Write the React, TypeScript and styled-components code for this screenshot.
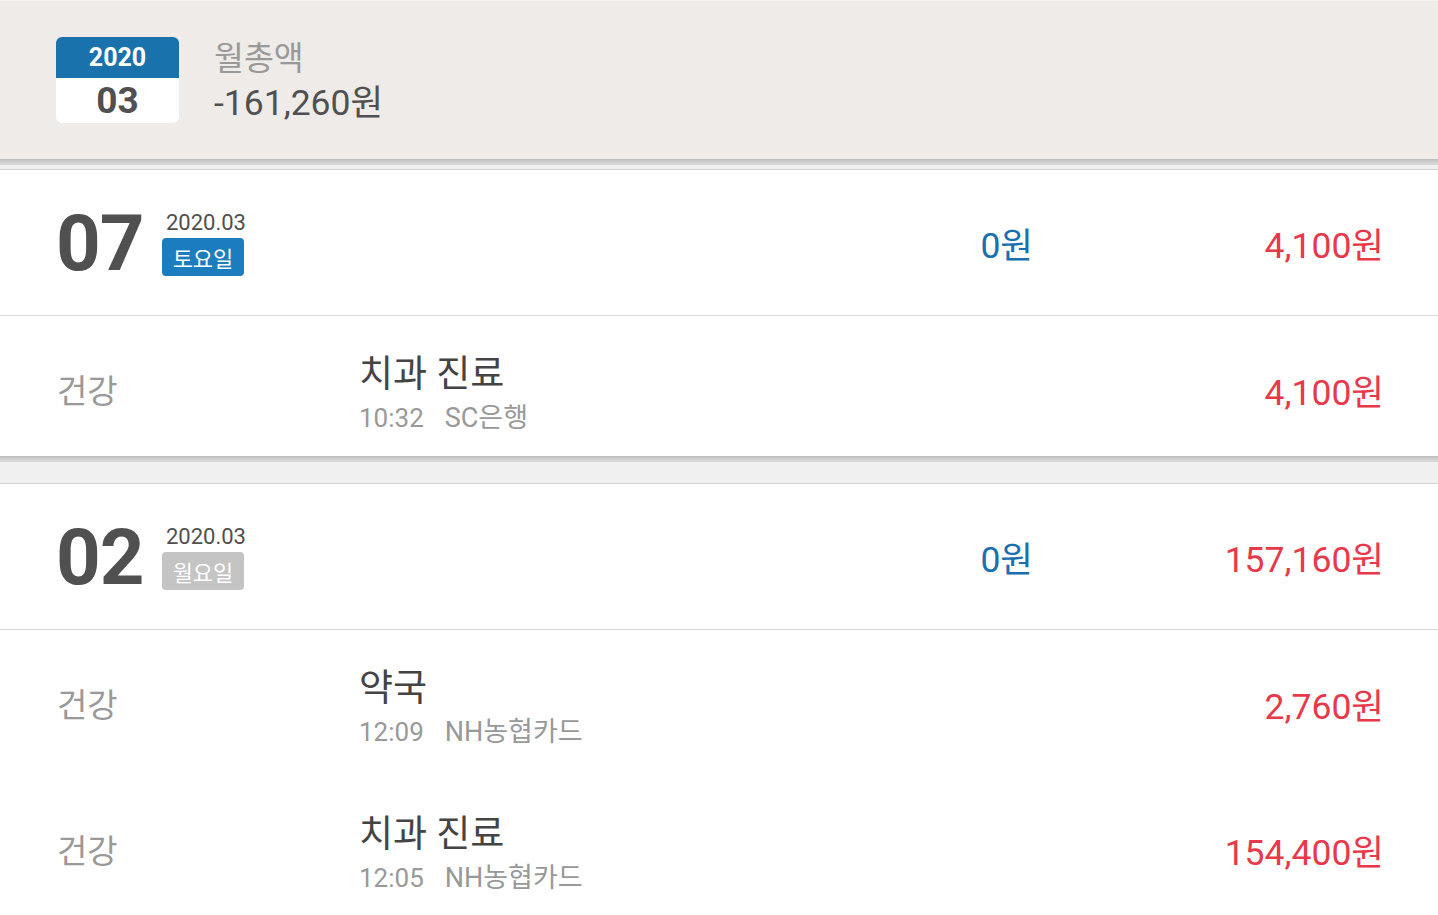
import styled, { createGlobalStyle } from 'styled-components';

const GlobalStyle = createGlobalStyle`
  html, body {
    margin: 0;
    padding: 0;
    background: #ffffff;
  }
  body {
    font-family: Roboto, "Noto Sans CJK KR", "Noto Sans", sans-serif;
    color: #505050;
  }
`;

interface Item {
  category: string;
  title: string;
  time: string;
  account: string;
  amount: string;
}

interface Day {
  day: string;
  month: string;
  weekday: string;
  weekend: boolean;
  income: string;
  expense: string;
  items: Item[];
}

const days: Day[] = [
  {
    day: '07',
    month: '2020.03',
    weekday: '토요일',
    weekend: true,
    income: '0원',
    expense: '4,100원',
    items: [{ category: '건강', title: '치과 진료', time: '10:32', account: 'SC은행', amount: '4,100원' }],
  },
  {
    day: '02',
    month: '2020.03',
    weekday: '월요일',
    weekend: false,
    income: '0원',
    expense: '157,160원',
    items: [
      { category: '건강', title: '약국', time: '12:09', account: 'NH농협카드', amount: '2,760원' },
      { category: '건강', title: '치과 진료', time: '12:05', account: 'NH농협카드', amount: '154,400원' },
    ],
  },
];

export default function App() {
  return (
    <>
      <GlobalStyle />
      <Page>
        <Summary>
          <Calendar>
            <CalendarYear>2020</CalendarYear>
            <CalendarMonth>03</CalendarMonth>
          </Calendar>
          <SummaryText>
            <SummaryLabel>월총액</SummaryLabel>
            <SummaryValue>-161,260원</SummaryValue>
          </SummaryText>
        </Summary>
        {days.map((d, i) => (
          <Group key={d.day}>
            <Gap $first={i === 0} />
            <DayHeader>
              <DayNumber>{d.day}</DayNumber>
              <DayMeta>
                <DayMonth>{d.month}</DayMonth>
                <Weekday $weekend={d.weekend}>{d.weekday}</Weekday>
              </DayMeta>
              <Income>{d.income}</Income>
              <Expense>{d.expense}</Expense>
            </DayHeader>
            {d.items.map((it) => (
              <ItemRow key={it.time}>
                <Category>{it.category}</Category>
                <ItemBody>
                  <ItemTitle>{it.title}</ItemTitle>
                  <ItemSub>
                    <span>{it.time}</span>
                    <Account>{it.account}</Account>
                  </ItemSub>
                </ItemBody>
                <Expense>{it.amount}</Expense>
              </ItemRow>
            ))}
          </Group>
        ))}
      </Page>
    </>
  );
}

const Page = styled.div`
  width: 100%;
  height: 915px;
  overflow: hidden;
  background: #ffffff;
`;

const Summary = styled.header`
  height: 159px;
  box-sizing: border-box;
  border-top: 1px solid #f4f3f2;
  background: #eeebe8;
  display: flex;
  align-items: center;
  padding-left: 56px;
  gap: 35px;
`;

const Calendar = styled.div`
  width: 123px;
  height: 86px;
  border-radius: 6px;
  overflow: hidden;
  background: #ffffff;
  display: flex;
  flex-direction: column;
`;

const CalendarYear = styled.div`
  height: 41px;
  background: #1a72ad;
  color: #ffffff;
  font-family: Roboto, sans-serif;
  font-weight: 700;
  font-size: 25px;
  display: flex;
  align-items: center;
  justify-content: center;
`;

const CalendarMonth = styled.div`
  flex: 1;
  color: #505050;
  font-family: Roboto, sans-serif;
  font-weight: 700;
  font-size: 37px;
  display: flex;
  align-items: center;
  justify-content: center;
`;

const SummaryText = styled.div`
  display: flex;
  flex-direction: column;
  gap: 3px;
  margin-top: 2px;
`;

const SummaryLabel = styled.div`
  font-size: 32.5px;
  line-height: 40px;
  color: #999999;
`;

const SummaryValue = styled.div`
  font-size: 35.5px;
  line-height: 42px;
  color: #505050;
`;

const Group = styled.section`
  display: flex;
  flex-direction: column;
`;

const Gap = styled.div<{ $first: boolean }>`
  position: relative;
  z-index: 1;
  margin-top: ${({ $first }) => ($first ? '0' : '-6px')};
  height: ${({ $first }) => ($first ? '10px' : '27px')};
  background: linear-gradient(#bcbcbc, #cfcfcf 3px, #d9d9d9 6px, #f0f0f0 6px);
  border-bottom: 1px solid #d2d2d2;
`;

const DayHeader = styled.div`
  height: 145px;
  border-bottom: 1px solid #d8d8d8;
  display: flex;
  align-items: center;
  padding: 0 54px 0 56px;
`;

const DayNumber = styled.div`
  font-family: Roboto, sans-serif;
  font-weight: 700;
  font-size: 78px;
  letter-spacing: -1px;
  color: #505050;
  width: 110px;
  margin-top: 2px;
`;

const DayMeta = styled.div`
  display: flex;
  flex-direction: column;
  align-items: flex-start;
  gap: 2px;
  flex: 1;
  margin-left: -4px;
`;

const DayMonth = styled.div`
  font-size: 22px;
  line-height: 26px;
  color: #505050;
  padding-left: 4px;
`;

const Weekday = styled.div<{ $weekend: boolean }>`
  background: ${({ $weekend }) => ($weekend ? '#1b7dbd' : '#c4c4c4')};
  color: #ffffff;
  border-radius: 4px;
  width: 82px;
  height: 38px;
  font-size: 22px;
  display: flex;
  align-items: center;
  justify-content: center;
`;

const Income = styled.div`
  font-size: 35.5px;
  color: #1a6fae;
  text-align: right;
`;

const Expense = styled.div`
  width: 351px;
  font-size: 35.5px;
  color: #e8394b;
  text-align: right;
`;

const ItemRow = styled.div`
  height: 146px;
  display: flex;
  align-items: center;
  padding: 0 54px 0 57px;
`;

const Category = styled.div`
  width: 302px;
  font-size: 33px;
  color: #999999;
`;

const ItemBody = styled.div`
  flex: 1;
  display: flex;
  flex-direction: column;
  gap: 6px;
  margin-top: 10px;
`;

const ItemTitle = styled.div`
  font-size: 37px;
  line-height: 42px;
  color: #444444;
`;

const ItemSub = styled.div`
  font-size: 26px;
  line-height: 32px;
  color: #999999;
  display: flex;
`;

const Account = styled.span`
  margin-left: 21px;
  font-size: 27px;
`;
